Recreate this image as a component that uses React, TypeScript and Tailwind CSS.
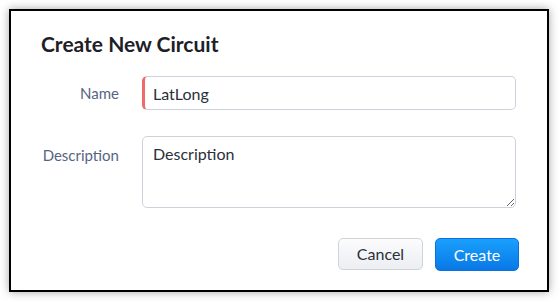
import { useState } from 'react'

function FieldRow({ label, top, children }: { label: string; top?: boolean; children: React.ReactNode }) {
  return (
    <div className={`flex gap-[23px] ${top ? 'items-start' : 'items-center'}`}>
      <label className={`w-[78px] shrink-0 text-right text-[15px] text-[#56657f] ${top ? 'pt-[8px]' : ''}`}>
        {label}
      </label>
      {children}
    </div>
  )
}

export default function App() {
  const [name, setName] = useState('LatLong')
  const [description, setDescription] = useState('Description')

  return (
    <div
      className="h-[302px] w-[559px] bg-white p-[9px]"
      style={{ fontFamily: 'Lato, "Noto Sans", sans-serif' }}
    >
      <div className="flex h-[283px] w-[540px] flex-col border-2 border-black bg-white pt-[20px] pr-[31px] pb-[19px] pl-[30px] shadow-[0_0_9px_rgba(0,0,0,0.35)]">
        <h2 className="text-[21px] font-bold leading-[25px] text-[#1d2026]">Create New Circuit</h2>

        <div className="mt-[20px] flex flex-col gap-[26px]">
          <FieldRow label="Name">
            <input
              value={name}
              onChange={(e) => setName(e.target.value)}
              className="h-[34px] flex-1 rounded-[5px] border border-l-[3px] border-[#cdd2da] border-l-[#ef6a6a] pl-[8px] text-[16px] text-[#2a2f3a] outline-none"
            />
          </FieldRow>

          <FieldRow label="Description" top>
            <textarea
              value={description}
              onChange={(e) => setDescription(e.target.value)}
              className="h-[72px] flex-1 rounded-[5px] border border-[#cdd2da] px-[10px] py-[6px] text-[16px] leading-[22px] text-[#2a2f3a] outline-none"
            />
          </FieldRow>
        </div>

        <div className="mt-auto -mr-[3px] flex justify-end gap-[12px]">
          <button className="h-[32px] w-[85px] rounded-[5px] border border-[#cfd3da] bg-gradient-to-b from-[#fcfcfd] to-[#eceef2] text-[16px] text-[#2a2f3a]">
            Cancel
          </button>
          <button className="h-[33px] w-[84px] rounded-[5px] border border-[#0b72dc] bg-gradient-to-b from-[#1aa0fd] to-[#0a78e6] text-[16px] text-white">
            Create
          </button>
        </div>
      </div>
    </div>
  )
}
